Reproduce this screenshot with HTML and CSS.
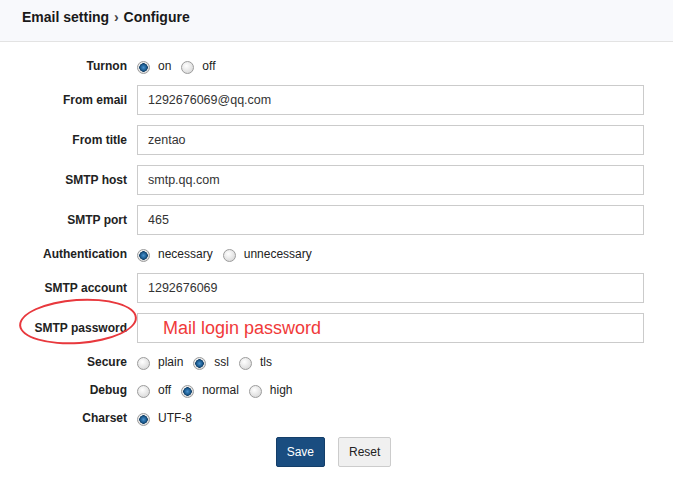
FILE: index.html
```html
<!DOCTYPE html>
<html lang="en">

<head>
    <meta charset="UTF-8">
    <meta name="viewport" content="width=device-width, initial-scale=1.0">
    <title>Email setting - Configure</title>
    <link rel="stylesheet" href="styles.css">
</head>

<body>
    <div class="page-header">
        <strong>Email setting</strong>
        <span class="sep">&rsaquo;</span>
        <strong>Configure</strong>
    </div>

    <form class="mail-form">
        <div class="row">
            <span class="label">Turnon</span>
            <div class="options">
                <label class="radio"><input type="radio" name="turnon" checked><span>on</span></label>
                <label class="radio"><input type="radio" name="turnon"><span>off</span></label>
            </div>
        </div>
        <div class="row">
            <span class="label">From email</span>
            <input class="text" type="text" value="1292676069@qq.com">
        </div>
        <div class="row">
            <span class="label">From title</span>
            <input class="text" type="text" value="zentao">
        </div>
        <div class="row">
            <span class="label">SMTP host</span>
            <input class="text" type="text" value="smtp.qq.com">
        </div>
        <div class="row">
            <span class="label">SMTP port</span>
            <input class="text" type="text" value="465">
        </div>
        <div class="row">
            <span class="label">Authentication</span>
            <div class="options">
                <label class="radio"><input type="radio" name="auth" checked><span>necessary</span></label>
                <label class="radio"><input type="radio" name="auth"><span>unnecessary</span></label>
            </div>
        </div>
        <div class="row">
            <span class="label">SMTP account</span>
            <input class="text" type="text" value="1292676069">
        </div>
        <div class="row highlight">
            <span class="label">SMTP password</span>
            <input class="text note" type="text" value="Mail login password">
            <span class="circle"></span>
        </div>
        <div class="row">
            <span class="label">Secure</span>
            <div class="options">
                <label class="radio"><input type="radio" name="secure"><span>plain</span></label>
                <label class="radio"><input type="radio" name="secure" checked><span>ssl</span></label>
                <label class="radio"><input type="radio" name="secure"><span>tls</span></label>
            </div>
        </div>
        <div class="row">
            <span class="label">Debug</span>
            <div class="options">
                <label class="radio"><input type="radio" name="debug"><span>off</span></label>
                <label class="radio"><input type="radio" name="debug" checked><span>normal</span></label>
                <label class="radio"><input type="radio" name="debug"><span>high</span></label>
            </div>
        </div>
        <div class="row">
            <span class="label">Charset</span>
            <div class="options">
                <label class="radio"><input type="radio" name="charset" checked><span>UTF-8</span></label>
            </div>
        </div>
        <div class="actions">
            <button type="button" class="btn primary">Save</button>
            <button type="reset" class="btn">Reset</button>
        </div>
    </form>
</body>

</html>
```

FILE: styles.css
```css
* {
    margin: 0;
    padding: 0;
    box-sizing: border-box;
    font-family: "Liberation Sans", Arial, sans-serif;
}

body {
    background: #fff;
    color: #222;
    font-size: 12px;
}

.page-header {
    height: 42px;
    padding: 7px 22px 0;
    line-height: 20px;
    font-size: 14px;
    color: #1a1a1a;
    background: #f8f9fc;
    border-bottom: 1px solid #e3e3e3;
}

.page-header .sep {
    font-size: 14px;
    font-weight: bold;
    color: #444;
    margin: 0 1px;
}

.mail-form {
    padding-top: 15px;
    display: flex;
    flex-direction: column;
    gap: 10px;
}

.row {
    position: relative;
    display: grid;
    grid-template-columns: 127px 507px;
    column-gap: 10px;
    align-items: center;
    min-height: 18px;
}

.row .label {
    text-align: right;
    font-weight: bold;
    color: #222;
}

.text {
    height: 30px;
    padding: 0 10px;
    border: 1px solid #cbcbcb;
    font-size: 12.5px;
    color: #333;
    outline: none;
}

.text.note {
    padding-left: 25px;
    font-size: 18px;
    color: #f03a3a;
}

.circle {
    position: absolute;
    left: 19px;
    top: -14px;
    width: 118px;
    height: 45px;
    border: 2.5px solid #e8383d;
    border-radius: 50%;
    transform: rotate(-4deg);
}

.options {
    display: flex;
    align-items: center;
    gap: 10px;
}

.radio {
    display: flex;
    align-items: center;
    gap: 8px;
    line-height: 18px;
}

.radio input {
    appearance: none;
    width: 13px;
    height: 13px;
    margin-top: 3px;
    border: 1px solid #9c9c9c;
    border-radius: 50%;
    background: radial-gradient(circle at 40% 35%, #fff, #d0d0d0);
}

.radio input:checked {
    background: radial-gradient(circle at 50% 50%, #4a93cf 0, #1b5a8e 3px, #123f66 4px, transparent 4.5px),
        radial-gradient(circle at 40% 35%, #fff, #d0d0d0);
}

.actions {
    display: flex;
    justify-content: center;
    gap: 13px;
    padding-right: 6px;
}

.btn {
    height: 30px;
    padding: 0 10px;
    font-size: 12px;
    color: #222;
    background: #f0f0f0;
    border: 1px solid #cccccc;
    border-radius: 2px;
    cursor: pointer;
}

.btn.primary {
    color: #fff;
    background: #1a4d80;
    border-color: #143e69;
}
```
